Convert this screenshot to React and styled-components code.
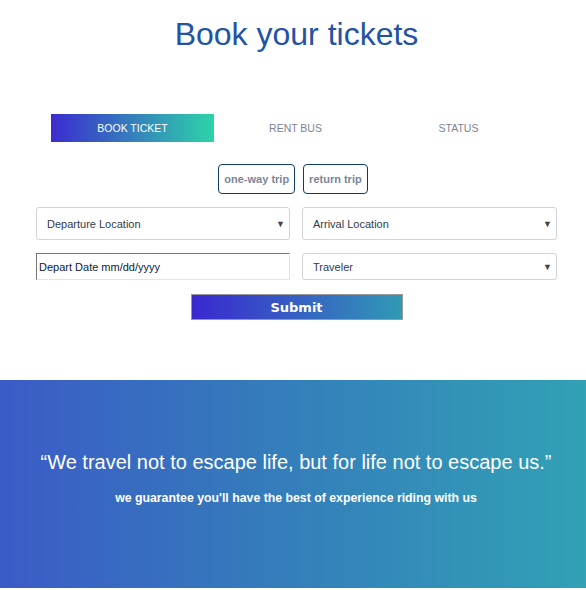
import React, { useState } from 'react'
import styled, { createGlobalStyle } from 'styled-components'

const GlobalStyle = createGlobalStyle`
  body {
    margin: 0;
    font-family: "Liberation Sans", Arial, sans-serif;
    background: #fff;
  }
`

const Page = styled.div`
  display: flex;
  flex-direction: column;
  width: 586px;
`

const Title = styled.h1`
  margin: 16px 0 0;
  padding-left: 7px;
  font-size: 32px;
  line-height: 37px;
  font-weight: 400;
  text-align: center;
  color: #2353a3;
`

const Tabs = styled.div`
  display: grid;
  grid-template-columns: repeat(3, 163px);
  margin: 61px 0 0 51px;
`

const Tab = styled.button`
  height: 28px;
  border: none;
  padding: 0;
  font-family: "Liberation Sans", Arial, sans-serif;
  font-size: 10.5px;
  text-transform: uppercase;
  color: ${({ $active }) => ($active ? '#fff' : '#7d8296')};
  background: ${({ $active }) =>
    $active ? 'linear-gradient(90deg, #3b2bd0 0%, #2ed4a9 100%)' : 'transparent'};
`

const TripRow = styled.div`
  display: flex;
  justify-content: center;
  gap: 8px;
  margin-top: 22px;
`

const TripButton = styled.button`
  height: 30px;
  padding: 0 5px;
  border: 1px solid #0c3c6b;
  border-radius: 4px;
  background: #fff;
  font-family: "Liberation Sans", Arial, sans-serif;
  font-size: 11px;
  font-weight: 700;
  color: #7a8598;
`

const Form = styled.div`
  display: grid;
  grid-template-columns: 254px 255px;
  column-gap: 12px;
  row-gap: 13px;
  margin: 13px 0 0 36px;
`

const SelectBox = styled.div`
  display: flex;
  align-items: center;
  justify-content: space-between;
  height: ${({ $h }) => $h}px;
  box-sizing: border-box;
  padding: 0 4px 0 10px;
  border: 1px solid #d2d4d8;
  border-radius: 3px;
  font-size: 11px;
  color: #333b4a;
`

const Arrow = styled.span`
  font-size: 9px;
  color: #444;
`

const DateInput = styled.div`
  display: flex;
  align-items: center;
  height: 27px;
  box-sizing: border-box;
  padding-left: 2px;
  border-style: solid;
  border-width: 1px;
  border-color: #767676 #e4e4e4 #e4e4e4 #767676;
  font-size: 11px;
  color: #0c1a3a;
`

const SubmitRow = styled.div`
  display: flex;
  justify-content: center;
  margin-top: 14px;
  padding-left: 7px;
`

const Submit = styled.button`
  width: 212px;
  height: 26px;
  border: 1px solid #9a9a9a;
  background: linear-gradient(90deg, #3a28d0 0%, #3199b6 100%);
  color: #fff;
  font-family: "DejaVu Sans", Verdana, sans-serif;
  font-size: 13px;
  font-weight: 700;
`

const Banner = styled.section`
  display: flex;
  flex-direction: column;
  align-items: center;
  margin-top: 60px;
  height: 208px;
  padding: 70px 0 0 6px;
  box-sizing: border-box;
  background: linear-gradient(90deg, #3b5bc7 0%, #3578bc 40%, #31a1b5 100%);
  color: #fff;
`

const Quote = styled.p`
  margin: 0;
  font-size: 20px;
  line-height: 24px;
`

const Sub = styled.p`
  margin: 17px 0 0;
  font-size: 12.3px;
  font-weight: 700;
`

const Select = ({ label, h }) => (
  <SelectBox $h={h}>
    {label}
    <Arrow>▼</Arrow>
  </SelectBox>
)

export default function App() {
  const [tab, setTab] = useState(0)
  const tabs = ['Book Ticket', 'Rent Bus', 'Status']
  return (
    <Page>
      <GlobalStyle />
      <Title>Book your tickets</Title>
      <Tabs>
        {tabs.map((t, i) => (
          <Tab key={t} $active={tab === i} onClick={() => setTab(i)}>
            {t}
          </Tab>
        ))}
      </Tabs>
      <TripRow>
        <TripButton>one-way trip</TripButton>
        <TripButton>return trip</TripButton>
      </TripRow>
      <Form>
        <Select label="Departure Location" h={33} />
        <Select label="Arrival Location" h={33} />
        <DateInput>Depart Date mm/dd/yyyy</DateInput>
        <Select label="Traveler" h={27} />
      </Form>
      <SubmitRow>
        <Submit>Submit</Submit>
      </SubmitRow>
      <Banner>
        <Quote>“We travel not to escape life, but for life not to escape us.”</Quote>
        <Sub>we guarantee you'll have the best of experience riding with us</Sub>
      </Banner>
    </Page>
  )
}
